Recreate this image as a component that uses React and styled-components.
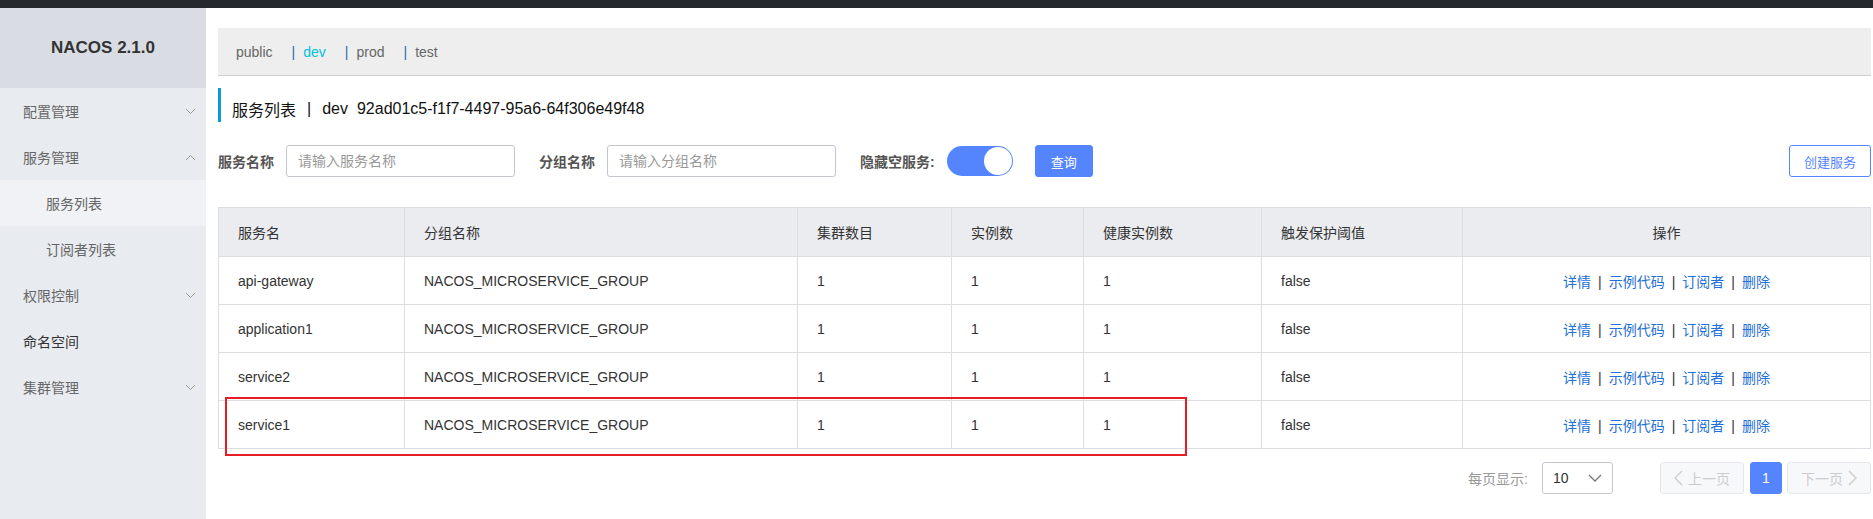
import React from "react";
import styled, { createGlobalStyle } from "styled-components";

const GlobalStyle = createGlobalStyle`
  html, body {
    margin: 0;
    padding: 0;
    background: #fff;
  }
  body {
    font-family: "Liberation Sans", "Noto Sans CJK SC", Arial, sans-serif;
    font-size: 14px;
    color: #333;
  }
  * {
    box-sizing: border-box;
  }
`;

const colors = {
  primary: "#5584ff",
  link: "#1f6fd6",
  border: "#dcdee3",
  headBg: "#ebecf0",
};

const Page = styled.div`
  display: flex;
  flex-direction: column;
  min-height: 100vh;
`;

const TopBar = styled.div`
  height: 8px;
  background: #25292d;
`;

const Body = styled.div`
  display: flex;
  flex: 1;
`;

const Sidebar = styled.aside`
  width: 206px;
  flex-shrink: 0;
  background: #e8ebf0;
`;

const Brand = styled.div`
  height: 80px;
  display: flex;
  align-items: center;
  justify-content: center;
  background: #d9dde3;
  font-size: 17px;
  font-weight: bold;
  color: #333;
`;

const MenuItem = styled.div`
  height: 46px;
  display: flex;
  align-items: center;
  justify-content: space-between;
  padding: 0 10px 0 ${(p) => (p.sub ? 46 : 23)}px;
  color: ${(p) => (p.dark ? "#333" : "#666")};
  background: ${(p) => (p.active ? "#f0f2f5" : "transparent")};
`;

const Main = styled.main`
  flex: 1;
  padding: 20px 2px 0 12px;
  min-width: 0;
`;

const NsBar = styled.div`
  height: 48px;
  display: flex;
  align-items: center;
  padding-left: 18px;
  background: #eeeeee;
  border-bottom: 1px solid #cfcfcf;
  color: #666;
`;

const NsItem = styled.span`
  margin-right: 19px;
  color: ${(p) => (p.current ? "#00c1de" : "#666")};
`;

const NsSep = styled.span`
  margin-right: 8px;
  color: #2f6aa8;
`;

const Title = styled.h3`
  margin: 12px 0 0;
  height: 34px;
  display: flex;
  align-items: center;
  padding-left: 11px;
  padding-top: 8px;
  border-left: 3px solid #0a9bd6;
  font-size: 16px;
  font-weight: normal;
  color: #111;
`;

const TitleSep = styled.span`
  margin: 0 11px;
`;

const TitleId = styled.span`
  margin-left: 9px;
`;

const SearchRow = styled.div`
  display: flex;
  align-items: center;
  margin-top: 23px;
  height: 32px;
`;

const Label = styled.span`
  font-weight: bold;
  color: #555;
  margin-right: ${(p) => p.gap || 12}px;
`;

const Input = styled.input`
  width: 229px;
  height: 32px;
  border: 1px solid #c4c6cf;
  border-radius: 3px;
  padding: 0 11px;
  font: inherit;
  margin-right: 24px;
  outline: none;
  &::placeholder {
    color: #999;
  }
`;

const Toggle = styled.div`
  width: 66px;
  height: 30px;
  border-radius: 15px;
  background: ${colors.primary};
  display: flex;
  justify-content: flex-end;
  align-items: center;
  padding: 1px;
  margin-right: 22px;
`;

const Knob = styled.div`
  width: 28px;
  height: 28px;
  border-radius: 50%;
  background: #fff;
`;

const Button = styled.button`
  height: 32px;
  padding: 0 ${(p) => (p.wide ? 14 : 15)}px;
  border-radius: 3px;
  font: inherit;
  font-size: 13px;
  cursor: pointer;
  border: 1px solid ${colors.primary};
  background: ${(p) => (p.outline ? "#fff" : colors.primary)};
  color: ${(p) => (p.outline ? colors.primary : "#fff")};
`;

const Spacer = styled.div`
  flex: 1;
`;

const TableWrap = styled.div`
  position: relative;
  margin-top: 30px;
`;

const Table = styled.table`
  width: 100%;
  border-collapse: collapse;
  border: 1px solid ${colors.border};
  table-layout: fixed;
`;

const Th = styled.th`
  height: 49px;
  background: ${colors.headBg};
  border: 1px solid ${colors.border};
  padding: 0 19px;
  font-weight: normal;
  text-align: ${(p) => (p.center ? "center" : "left")};
  color: #333;
`;

const Td = styled.td`
  height: 48px;
  border: 1px solid ${colors.border};
  padding: 0 19px;
  text-align: ${(p) => (p.center ? "center" : "left")};
  color: #333;
`;

const Link = styled.a`
  color: ${colors.link};
  text-decoration: none;
  cursor: pointer;
`;

const LinkSep = styled.span`
  margin: 0 7px;
  color: #333;
`;

const Highlight = styled.div`
  position: absolute;
  left: 7px;
  top: 190px;
  width: 962px;
  height: 59px;
  border: 2px solid #e61d25;
  pointer-events: none;
`;

const Pager = styled.div`
  display: flex;
  align-items: center;
  justify-content: flex-end;
  margin-top: 13px;
  height: 32px;
`;

const PagerLabel = styled.span`
  color: #999;
  margin-right: 14px;
`;

const Select = styled.div`
  width: 71px;
  height: 32px;
  border: 1px solid #c4c6cf;
  border-radius: 3px;
  display: flex;
  align-items: center;
  justify-content: space-between;
  padding: 0 10px;
  margin-right: 47px;
  color: #333;
`;

const PageBtn = styled.div`
  height: 32px;
  min-width: ${(p) => (p.active ? 32 : 84)}px;
  display: flex;
  align-items: center;
  justify-content: center;
  gap: 5px;
  border-radius: 3px;
  margin-left: ${(p) => p.ml || 0}px;
  border: 1px solid ${(p) => (p.active ? colors.primary : "#e6e7eb")};
  background: ${(p) => (p.active ? colors.primary : "#f7f8fa")};
  color: ${(p) => (p.active ? "#fff" : "#ccc")};
`;

const Chevron = ({ up, color = "#999" }) => (
  <svg width="11" height="7" viewBox="0 0 11 7" fill="none">
    <polyline
      points={up ? "1,6 5.5,1.5 10,6" : "1,1 5.5,5.5 10,1"}
      stroke={color}
      strokeWidth="1"
    />
  </svg>
);

const SelectArrow = () => (
  <svg width="14" height="9" viewBox="0 0 14 9" fill="none">
    <polyline points="1,1 7,7 13,1" stroke="#777" strokeWidth="1.3" />
  </svg>
);

const PageArrow = ({ right }) => (
  <svg width="9" height="16" viewBox="0 0 9 16" fill="none">
    <polyline
      points={right ? "1,1 8,8 1,15" : "8,1 1,8 8,15"}
      stroke="#ccc"
      strokeWidth="1.4"
    />
  </svg>
);

const namespaces = [
  { name: "public" },
  { name: "dev", current: true },
  { name: "prod" },
  { name: "test" },
];

const rows = ["api-gateway", "application1", "service2", "service1"];

const widths = [186, 393, 154, 132, 178, 201, null];

const App = () => {
  return (
    <Page>
      <GlobalStyle />
      <TopBar />
      <Body>
        <Sidebar>
          <Brand>NACOS 2.1.0</Brand>
          <MenuItem>
            配置管理 <Chevron />
          </MenuItem>
          <MenuItem>
            服务管理 <Chevron up />
          </MenuItem>
          <MenuItem sub active>
            服务列表
          </MenuItem>
          <MenuItem sub>订阅者列表</MenuItem>
          <MenuItem>
            权限控制 <Chevron />
          </MenuItem>
          <MenuItem dark>命名空间</MenuItem>
          <MenuItem>
            集群管理 <Chevron />
          </MenuItem>
        </Sidebar>

        <Main>
          <NsBar>
            {namespaces.map((ns, i) => (
              <NsItem key={ns.name} current={ns.current}>
                {i > 0 && <NsSep>|</NsSep>}
                {ns.name}
              </NsItem>
            ))}
          </NsBar>

          <Title>
            服务列表
            <TitleSep>|</TitleSep>
            dev
            <TitleId>92ad01c5-f1f7-4497-95a6-64f306e49f48</TitleId>
          </Title>

          <SearchRow>
            <Label>服务名称</Label>
            <Input placeholder="请输入服务名称" />
            <Label>分组名称</Label>
            <Input placeholder="请输入分组名称" />
            <Label gap={12}>隐藏空服务:</Label>
            <Toggle>
              <Knob />
            </Toggle>
            <Button>查询</Button>
            <Spacer />
            <Button outline wide>
              创建服务
            </Button>
          </SearchRow>

          <TableWrap>
            <Table>
              <colgroup>
                {widths.map((w, i) => (
                  <col key={i} style={w ? { width: w } : undefined} />
                ))}
              </colgroup>
              <thead>
                <tr>
                  <Th>服务名</Th>
                  <Th>分组名称</Th>
                  <Th>集群数目</Th>
                  <Th>实例数</Th>
                  <Th>健康实例数</Th>
                  <Th>触发保护阈值</Th>
                  <Th center>操作</Th>
                </tr>
              </thead>
              <tbody>
                {rows.map((name) => (
                  <tr key={name}>
                    <Td>{name}</Td>
                    <Td>NACOS_MICROSERVICE_GROUP</Td>
                    <Td>1</Td>
                    <Td>1</Td>
                    <Td>1</Td>
                    <Td>false</Td>
                    <Td center>
                      <Link>详情</Link>
                      <LinkSep>|</LinkSep>
                      <Link>示例代码</Link>
                      <LinkSep>|</LinkSep>
                      <Link>订阅者</Link>
                      <LinkSep>|</LinkSep>
                      <Link>删除</Link>
                    </Td>
                  </tr>
                ))}
              </tbody>
            </Table>
            <Highlight />
          </TableWrap>

          <Pager>
            <PagerLabel>每页显示:</PagerLabel>
            <Select>
              10 <SelectArrow />
            </Select>
            <PageBtn>
              <PageArrow /> 上一页
            </PageBtn>
            <PageBtn active ml={6}>
              1
            </PageBtn>
            <PageBtn ml={5}>
              下一页 <PageArrow right />
            </PageBtn>
          </Pager>
        </Main>
      </Body>
    </Page>
  );
};

export default App;
